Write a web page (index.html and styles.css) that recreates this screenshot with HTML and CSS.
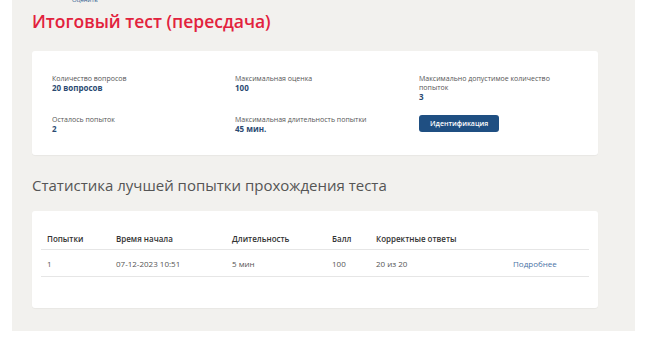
FILE: index.html
```html
<!DOCTYPE html>
<html lang="ru">
<head>
  <meta charset="UTF-8">
  <title>Итоговый тест (пересдача)</title>
  <link rel="stylesheet" href="styles.css">
</head>
<body>
  <div class="page">
    <a class="rate" href="#">Оценить</a>
    <h1>Итоговый тест (пересдача)</h1>

    <div class="card info">
      <div class="item">
        <div class="label">Количество вопросов</div>
        <div class="value">20 вопросов</div>
      </div>
      <div class="item">
        <div class="label">Максимальная оценка</div>
        <div class="value">100</div>
      </div>
      <div class="item wide">
        <div class="label">Максимально допустимое количество попыток</div>
        <div class="value">3</div>
      </div>
      <div class="item">
        <div class="label">Осталось попыток</div>
        <div class="value">2</div>
      </div>
      <div class="item">
        <div class="label">Максимальная длительность попытки</div>
        <div class="value">45 мин.</div>
      </div>
      <div class="item">
        <button class="btn">Идентификация</button>
      </div>
    </div>

    <h2>Статистика лучшей попытки прохождения теста</h2>

    <div class="card stats">
      <table>
        <thead>
          <tr>
            <th class="c1">Попытки</th>
            <th class="c2">Время начала</th>
            <th class="c3">Длительность</th>
            <th class="c4">Балл</th>
            <th class="c5">Корректные ответы</th>
            <th></th>
          </tr>
        </thead>
        <tbody>
          <tr>
            <td>1</td>
            <td>07-12-2023 10:51</td>
            <td>5 мин</td>
            <td>100</td>
            <td>20 из 20</td>
            <td><a href="#">Подробнее</a></td>
          </tr>
        </tbody>
      </table>
    </div>
  </div>
</body>
</html>
```

FILE: styles.css
```css
body { margin: 0; background: #fff; font-family: "Open Sans", sans-serif; }
.page {
  display: flow-root;
  margin-left: 12px;
  width: 566px;
  padding: 0 37px 23px 20px;
  background: #f2f1ee;
}
.rate {
  display: block;
  margin: -4px 0 0 40px;
  height: 4px;
  font-size: 6px;
  line-height: 8px;
  color: #2c5a8c;
  text-decoration: none;
}
h1 {
  margin: 8px 0 0;
  font-size: 17.5px;
  line-height: 26px;
  font-weight: 600;
  color: #e2223d;
}
.card {
  background: #fff;
  border-radius: 3px;
  box-shadow: 0 1px 1px rgba(0, 0, 0, 0.04);
}
.info {
  margin-top: 17px;
  display: grid;
  grid-template-columns: 183px 184px 1fr;
  row-gap: 14px;
  padding: 23px 20px 22px;
}
.label { font-size: 7px; line-height: 9px; color: #555; }
.value { font-size: 8px; line-height: 9px; font-weight: 700; color: #2b4a72; }
.wide .label { max-width: 140px; }
.btn {
  display: block;
  padding: 0 11px;
  height: 17px;
  border: 0;
  border-radius: 3px;
  background: #1f4f82;
  color: #fff;
  font-family: "Open Sans", sans-serif;
  font-size: 7px;
  font-weight: 600;
}
h2 {
  margin: 20px 0 0;
  font-size: 15px;
  line-height: 20px;
  font-weight: 400;
  color: #555;
}
.stats {
  margin-top: 16px;
  padding: 16px 9px 31px;
}
table { width: 100%; border-collapse: collapse; }
th, td {
  padding: 0 6px;
  text-align: left;
  font-size: 8px;
  color: #555;
  border-bottom: 1px solid #e6e6e6;
}
th { height: 22px; font-weight: 600; color: #333; }
td { height: 26px; }
.c1 { width: 57px; }
.c2 { width: 104px; }
.c3 { width: 88px; }
.c4 { width: 32px; }
.c5 { width: 125px; }
td a { color: #4a72a6; text-decoration: none; }
```
